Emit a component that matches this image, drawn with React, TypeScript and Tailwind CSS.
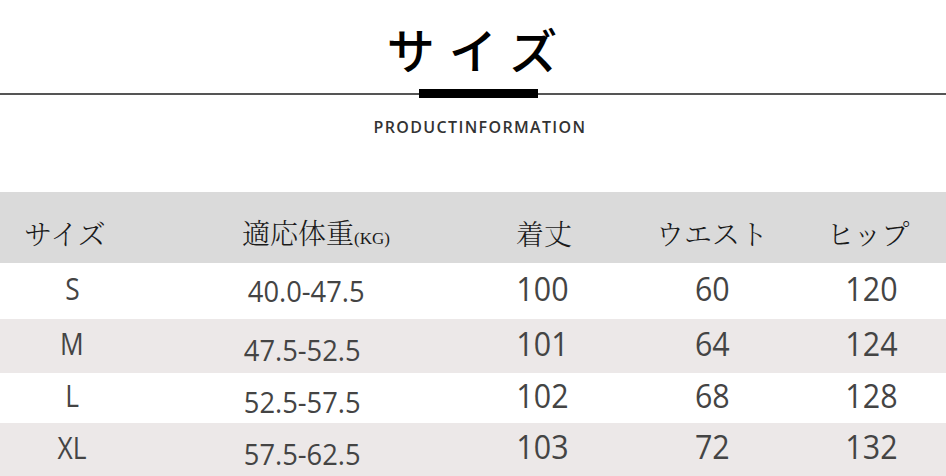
import React from "react";

const rows = [
  { s: "S", w: "40.0-47.5", a: "100", b: "60", c: "120", h: "h-[56px]", bg: "bg-white", shift: false },
  { s: "M", w: "47.5-52.5", a: "101", b: "64", c: "124", h: "h-[54px]", bg: "bg-[#ece8e8]", shift: true },
  { s: "L", w: "52.5-57.5", a: "102", b: "68", c: "128", h: "h-[50px]", bg: "bg-white", shift: true },
  { s: "XL", w: "57.5-62.5", a: "103", b: "72", c: "132", h: "h-[53px]", bg: "bg-[#ece8e8]", shift: true },
];

const cjkSans = { fontFamily: '"Noto Sans CJK JP", "Noto Sans", sans-serif' };

export default function App() {
  return (
    <div className="w-[946px] h-[476px] overflow-hidden bg-white">
      <div className="h-[192px] flex flex-col">
        <div
          className="pt-[20px] text-[48px] leading-[56px] tracking-[14px] pl-[12px] text-center font-medium text-black"
          style={cjkSans}
        >
          サイズ
        </div>
        <div className="mt-[13px] h-[9px] flex items-center">
          <div className="w-[419px] h-[2px] bg-[#555]" />
          <div className="w-[119px] h-[9px] bg-black" />
          <div className="flex-1 h-[2px] bg-[#555]" />
        </div>
        <div
          className="mt-[19px] text-[16px] leading-[20px] font-semibold text-[#333] text-center pl-[14px] tracking-[1.35px]"
          style={{ fontFamily: '"Open Sans", sans-serif' }}
        >
          PRODUCTINFORMATION
        </div>
      </div>

      <div
        className="grid grid-cols-[144px_320px_160px_176px_1fr] h-[71px] bg-[#dadada] items-center pt-[10px] text-[28px] leading-none text-[#1a1a1a] font-light"
        style={{ fontFamily: '"Noto Serif CJK JP", "Noto Sans CJK JP", serif' }}
      >
        <div className="text-center pr-[14px]">サイズ</div>
        <div className="text-center pl-[24px]">
          適応体重
          <span className="text-[17px]" style={{ fontFamily: '"Liberation Serif", serif' }}>(KG)</span>
        </div>
        <div className="text-center">着丈</div>
        <div className="text-center">ウエスト</div>
        <div className="text-center pr-[10px]">ヒップ</div>
      </div>

      {rows.map((r) => (
        <div
          key={r.s}
          className={`grid grid-cols-[144px_320px_160px_176px_1fr] items-center ${r.h} ${r.bg} text-[#444] leading-none`}
          style={{ fontFamily: '"Open Sans", sans-serif' }}
        >
          <div className="text-center text-[31px] pb-[5px]">
            <span className="inline-block scale-x-[0.85]">{r.s}</span>
          </div>
          <div className={`text-center text-[30px] ${r.shift ? "pt-[8px]" : "pb-[1px]"} ${r.s === "S" ? "pl-[4px]" : "pr-[4px]"}`}>
            <span className="inline-block scale-x-[0.91]">{r.w}</span>
          </div>
          <div className="text-center text-[32px] pb-[5px] pr-[3px]">
            <span className="inline-block scale-x-[0.95]">{r.a}</span>
          </div>
          <div className="text-center text-[32px] pb-[5px]">
            <span className="inline-block scale-x-[0.95]">{r.b}</span>
          </div>
          <div className="text-center text-[32px] pb-[5px] pr-[4px]">
            <span className="inline-block scale-x-[0.95]">{r.c}</span>
          </div>
        </div>
      ))}
    </div>
  );
}
